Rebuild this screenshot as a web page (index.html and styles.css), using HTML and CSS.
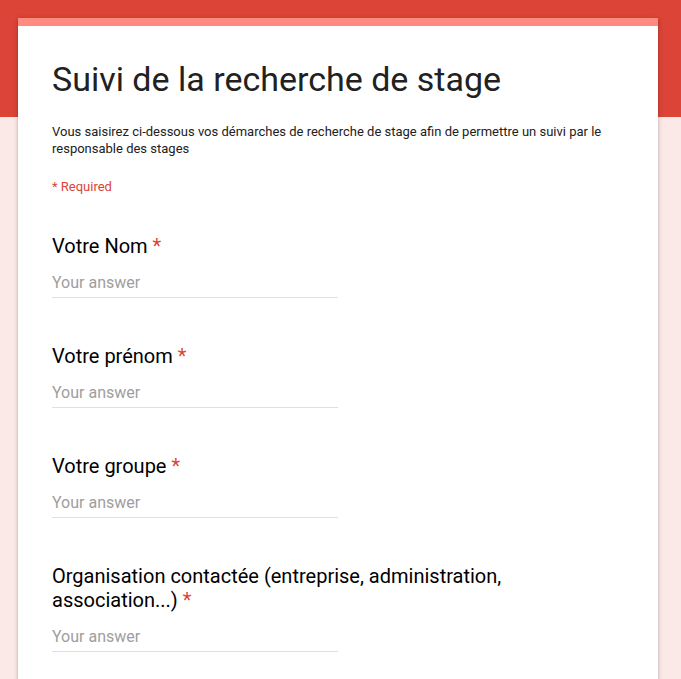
FILE: index.html
```html
<!DOCTYPE html>
<html lang="fr">
<head>
<meta charset="utf-8">
<title>Suivi de la recherche de stage</title>
<link rel="stylesheet" href="styles.css">
</head>
<body>
<main class="form-card">
  <header class="form-header">
    <h1 class="form-title">Suivi de la recherche de stage</h1>
    <p class="form-desc">Vous saisirez ci-dessous vos démarches de recherche de stage afin de permettre un suivi par le responsable des stages</p>
    <p class="form-required">* Required</p>
  </header>
  <div class="question">
    <label class="q-label">Votre Nom <span class="star">*</span></label>
    <input class="q-input" type="text" placeholder="Your answer">
  </div>
  <div class="question">
    <label class="q-label">Votre prénom <span class="star">*</span></label>
    <input class="q-input" type="text" placeholder="Your answer">
  </div>
  <div class="question">
    <label class="q-label">Votre groupe <span class="star">*</span></label>
    <input class="q-input" type="text" placeholder="Your answer">
  </div>
  <div class="question">
    <label class="q-label">Organisation contactée (entreprise, administration, association...) <span class="star">*</span></label>
    <input class="q-input" type="text" placeholder="Your answer">
  </div>
</main>
</body>
</html>
```

FILE: styles.css
```css
html, body {
  margin: 0;
  padding: 0;
}
body {
  background: linear-gradient(#db4437 0, #db4437 117px, #fbe9e7 117px) no-repeat, #fbe9e7;
  background-size: 100% 100%;
  min-height: 100vh;
  font-family: Roboto, "Liberation Sans", Arial, sans-serif;
  color: #212121;
  padding-top: 18px;
  box-sizing: border-box;
}
.form-card {
  width: 640px;
  margin: 0 0 0 18px;
  background: #fff;
  border-top: 8px solid #ff8a80;
  box-shadow: 0 2px 2px rgba(0,0,0,0.14), 0 3px 1px -2px rgba(0,0,0,0.12), 0 1px 5px rgba(0,0,0,0.2);
  padding: 33px 34px 120px 34px;
  box-sizing: border-box;
}
.form-title {
  margin: 0;
  font-size: 34px;
  line-height: 40px;
  font-weight: 400;
  color: #212121;
}
.form-desc {
  margin: 24px 0 0;
  font-size: 13px;
  line-height: 17px;
  color: #212121;
}
.form-required {
  margin: 21px 0 0;
  font-size: 13px;
  line-height: 17px;
  color: #db4437;
}
.question {
  margin-top: 39px;
  display: flex;
  flex-direction: column;
  align-items: flex-start;
}
.question + .question {
  margin-top: 46px;
}
.q-label {
  font-size: 20px;
  line-height: 24px;
  color: #000;
}
.star {
  color: #db4437;
}
.q-input {
  margin-top: 14.5px;
  width: 286px;
  border: 0;
  border-bottom: 1px solid #e0e0e0;
  padding: 0 0 4.5px;
  font-family: inherit;
  font-size: 16px;
  line-height: 20px;
  height: 25.5px;
  box-sizing: border-box;
  color: #212121;
  outline: none;
  background: transparent;
}
.q-input::placeholder {
  color: #9e9e9e;
  opacity: 1;
}
```
